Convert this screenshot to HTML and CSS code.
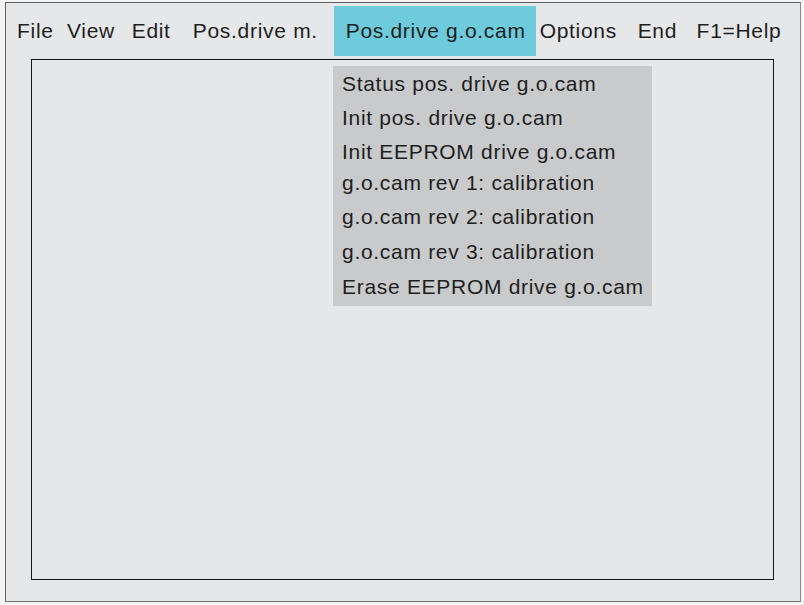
FILE: index.html
```html
<!DOCTYPE html>
<html>
<head>
<meta charset="utf-8">
<link rel="stylesheet" href="styles.css">
</head>
<body>
<div class="window">
  <div class="menubar">
    <span class="item m-file">File</span>
    <span class="item m-view">View</span>
    <span class="item m-edit">Edit</span>
    <span class="item m-posm">Pos.drive m.</span>
    <span class="item active">Pos.drive g.o.cam</span>
    <span class="item m-opt">Options</span>
    <span class="item m-end">End</span>
    <span class="item m-help">F1=Help</span>
  </div>
  <div class="workspace"></div>
  <ul class="dropdown">
    <li>Status pos. drive g.o.cam</li>
    <li>Init pos. drive g.o.cam</li>
    <li>Init EEPROM drive g.o.cam</li>
    <li class="tight">g.o.cam rev 1: calibration</li>
    <li>g.o.cam rev 2: calibration</li>
    <li class="loose">g.o.cam rev 3: calibration</li>
    <li class="loose">Erase EEPROM drive g.o.cam</li>
  </ul>
</div>
</body>
</html>
```
FILE: styles.css
```css
html, body {
  margin: 0;
  padding: 0;
  background: #f4f4f4;
}
body {
  font-family: "Liberation Sans", Arial, sans-serif;
  font-size: 21px;
  letter-spacing: 0.7px;
  color: #1e1e1e;
}
.window {
  position: relative;
  box-sizing: border-box;
  margin: 2px 0 0 5px;
  width: 796px;
  height: 600px;
  border: 1px solid #5e5e5e;
  border-right-color: #8a8a8a;
  border-bottom-color: #6a6a6a;
  background: #e6e7e9;
}
.menubar {
  display: flex;
  align-items: center;
  height: 50px;
  padding-top: 3px;
}
.item {
  line-height: 50px;
  white-space: nowrap;
}
.m-file { margin-left: 11px; }
.m-view { margin-left: 13.4px; }
.m-edit { margin-left: 16.7px; }
.m-posm { margin-left: 22.1px; }
.active {
  margin-left: 15.8px;
  box-sizing: border-box;
  width: 202px;
  padding-left: 12px;
  background: #6dcbdc;
}
.m-opt { margin-left: 4px; }
.m-end { margin-left: 20.7px; }
.m-help { margin-left: 19.5px; }
.workspace {
  box-sizing: border-box;
  margin: 3px 0 0 25px;
  width: 743px;
  height: 521px;
  border: 1px solid #151515;
}
.dropdown {
  position: absolute;
  left: 327px;
  top: 63px;
  box-sizing: border-box;
  width: 319px;
  height: 240px;
  margin: 0;
  padding: 1px 0 0 9px;
  list-style: none;
  background: #c9cacc;
}
.dropdown li {
  line-height: 34px;
  height: 34px;
  white-space: nowrap;
}
.dropdown li.tight {
  margin-top: -3px;
}
.dropdown li.loose {
  margin-top: 1px;
}
```
